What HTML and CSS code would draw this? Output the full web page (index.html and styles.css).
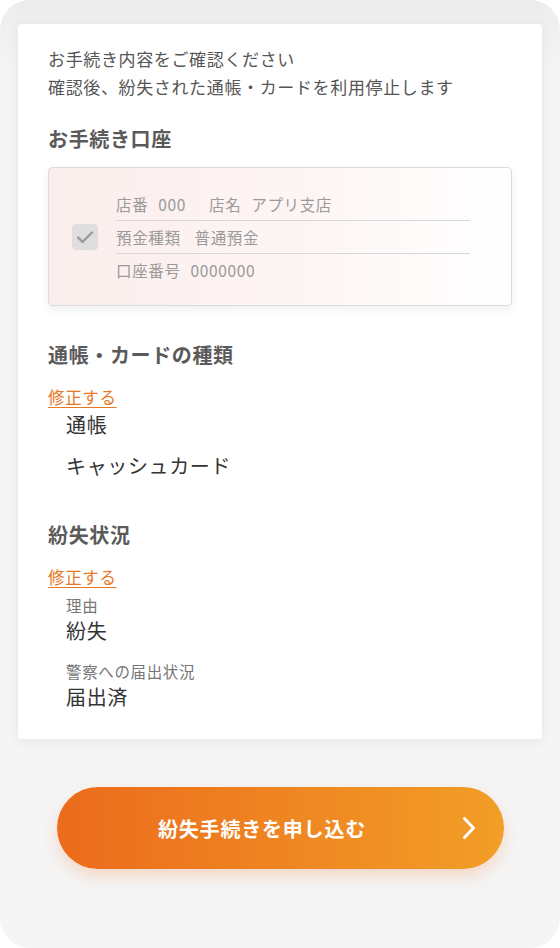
FILE: index.html
```html
<!DOCTYPE html>
<html lang="ja">
<head>
  <meta charset="UTF-8" />
  <title>紛失手続き確認</title>
  <link rel="stylesheet" href="styles.css">
</head>
<body>
  <div class="frame">
    <div class="card">
      <p class="intro">お手続き内容をご確認ください<br>確認後、紛失された通帳・カードを利用停止します</p>

      <h2 class="heading first">お手続き口座</h2>
      <div class="account">
        <span class="check">
          <svg width="18" height="14" viewBox="0 0 18 14"><path d="M2 7.5 L6.5 12 L16 2.5" fill="none" stroke="#9a9a9a" stroke-width="2.4" stroke-linecap="round" stroke-linejoin="round"/></svg>
        </span>
        <div class="rows">
          <div class="row"><span class="key">店番</span><span class="val gap">000</span><span class="key">店名</span><span class="val">アプリ支店</span></div>
          <div class="row"><span class="key wide">預金種類</span><span class="val">普通預金</span></div>
          <div class="row"><span class="key">口座番号</span><span class="val">0000000</span></div>
        </div>
      </div>

      <h2 class="heading">通帳・カードの種類</h2>
      <a class="edit" href="#">修正する</a>
      <div class="item">通帳</div>
      <div class="item">キャッシュカード</div>

      <h2 class="heading second">紛失状況</h2>
      <a class="edit" href="#">修正する</a>
      <div class="label">理由</div>
      <div class="item">紛失</div>
      <div class="label">警察への届出状況</div>
      <div class="item last">届出済</div>
    </div>

    <button class="submit">
      紛失手続きを申し込む
      <svg class="chev" width="16" height="26" viewBox="0 0 16 26"><path d="M3.5 3.5 L12.5 13 L3.5 22.5" fill="none" stroke="#fff" stroke-width="3" stroke-linecap="round" stroke-linejoin="round"/></svg>
    </button>
  </div>
</body>
</html>
```

FILE: styles.css
```css
body {
  margin: 0;
  background: #fff;
  font-family: "Noto Sans CJK JP", "Noto Sans", sans-serif;
  letter-spacing: 0.04em;
}

.frame {
  width: 560px;
  height: 948px;
  box-sizing: border-box;
  padding-top: 24px;
  border-radius: 30px;
  background: linear-gradient(#ececec, #f4f4f4 60px, #f5f5f5);
}

.card {
  margin: 0 18px;
  padding: 21px 30px 29px;
  background: #fff;
  border-radius: 4px;
  box-shadow: 0 2px 12px rgba(0,0,0,0.07);
}

.intro {
  margin: 0;
  font-size: 17px;
  line-height: 28px;
  color: #555;
}

.heading {
  margin: 36px 0 0;
  font-size: 20px;
  line-height: 26px;
  font-weight: bold;
  color: #5a5a5a;
}

.heading.first {
  margin-top: 25px;
}

.heading.second {
  margin-top: 43px;
}

.account {
  display: flex;
  align-items: center;
  margin-top: 15px;
  padding: 20px 41px 19px 23px;
  border: 1px solid #dcdcdc;
  border-radius: 4px;
  background: linear-gradient(90deg, #fbeeec, #fdf5f4 55%, #fff);
  box-shadow: 0 4px 8px rgba(0,0,0,0.06);
}

.check {
  display: flex;
  align-items: center;
  justify-content: center;
  width: 26px;
  height: 26px;
  border-radius: 4px;
  background: #dedede;
  flex-shrink: 0;
}

.rows {
  flex: 1;
  margin-left: 18px;
}

.row {
  display: flex;
  padding: 5px 0;
  font-size: 15.5px;
  line-height: 22px;
  color: #9a9a9a;
}

.row + .row {
  border-top: 1px solid #d8d8d8;
}

.key {
  margin-right: 10px;
}

.key.wide {
  margin-right: 14px;
}

.val.gap {
  margin-right: 23px;
}

.edit {
  display: block;
  width: fit-content;
  margin-top: 17px;
  font-size: 16.5px;
  line-height: 24px;
  color: #e87722;
  text-decoration: underline;
  text-underline-offset: 3px;
}

.item {
  margin: 3px 0 15px 18px;
  font-size: 20px;
  line-height: 26px;
  color: #333;
}

.label {
  margin: 6px 0 0 18px;
  font-size: 15.5px;
  line-height: 20px;
  color: #777;
}

.label + .item {
  margin-top: 3px;
  margin-bottom: 17px;
}

.item.last {
  margin-bottom: 0;
}

.submit {
  position: relative;
  display: block;
  width: 447px;
  height: 82px;
  margin: 48px auto 0;
  padding: 0 36px 0 0;
  border: none;
  border-radius: 41px;
  background: linear-gradient(90deg, #ec6b1c, #f29e27);
  box-shadow: 0 8px 16px rgba(240,120,40,0.22);
  color: #fff;
  font-family: inherit;
  font-size: 20px;
  font-weight: bold;
  letter-spacing: 0.04em;
  cursor: pointer;
}

.chev {
  position: absolute;
  right: 27px;
  top: 28px;
}
```
